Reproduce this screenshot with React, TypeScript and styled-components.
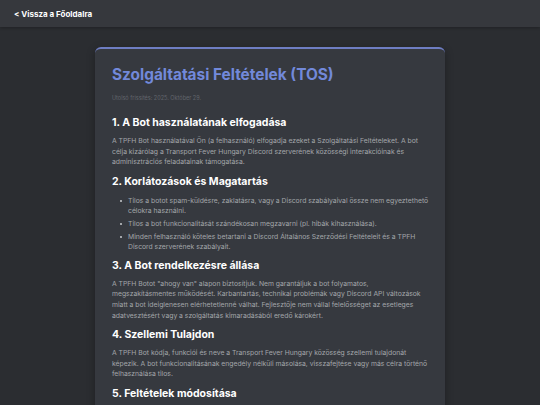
import React from 'react';
import styled, { createGlobalStyle } from 'styled-components';

const GlobalStyle = createGlobalStyle`
  html, body {
    margin: 0;
    padding: 0;
    background: #2b2d31;
  }
  body {
    font-family: Inter, "Noto Sans", "Liberation Sans", sans-serif;
    color: #dcddde;
  }
`;

const Header = styled.header`
  background: #36383d;
  height: 27px;
  display: flex;
  align-items: center;
  padding: 0 14px;
  box-shadow: 0 1px 3px rgba(0, 0, 0, 0.25);
`;

const BackLink = styled.a`
  color: #ffffff;
  font-weight: 700;
  font-size: 8px;
  text-decoration: none;
`;

const Main = styled.main`
  display: flex;
  justify-content: center;
  padding-top: 20px;
`;

const Card = styled.article`
  width: 350px;
  box-sizing: border-box;
  background: #36393f;
  border-top: 2px solid #6e7dc2;
  border-radius: 6px;
  padding: 15px 14px 20px 17px;
  box-shadow: 0 2px 8px rgba(0, 0, 0, 0.3);
`;

const Title = styled.h1`
  margin: 0;
  color: #7289da;
  font-size: 15.4px;
  font-weight: 700;
  line-height: 22px;
`;

const Updated = styled.p`
  margin: 9px 0 15px;
  font-size: 5.5px;
  color: #62656c;
`;

const SectionTitle = styled.h2`
  margin: 7px 0 6px;
  color: #ffffff;
  font-size: 10.5px;
  font-weight: 700;
  line-height: 14px;
`;

const Paragraph = styled.p`
  margin: 0;
  padding-right: 3px;
  font-size: 6.8px;
  line-height: 10.6px;
  color: #a3a6aa;
`;

const List = styled.ul`
  margin: 0;
  padding: 1px 0 0 8px;
  list-style: none;
`;

const Item = styled.li`
  position: relative;
  padding-left: 8px;
  font-size: 6.8px;
  line-height: 10px;
  color: #a3a6aa;
  & + & {
    margin-top: 3px;
  }
  &::before {
    content: '';
    position: absolute;
    left: 0;
    top: 4px;
    width: 2px;
    height: 2px;
    background: #a3a6aa;
  }
`;

const sections = [
  {
    title: '1. A Bot használatának elfogadása',
    text: 'A TPFH Bot használatával Ön (a felhasználó) elfogadja ezeket a Szolgáltatási Feltételeket. A bot célja kizárólag a Transport Fever Hungary Discord szerverének közösségi interakcióinak és adminisztrációs feladatainak támogatása.',
  },
  {
    title: '2. Korlátozások és Magatartás',
    items: [
      'Tilos a botot spam-küldésre, zaklatásra, vagy a Discord szabályaival össze nem egyeztethető célokra használni.',
      'Tilos a bot funkcionalitását szándékosan megzavarni (pl. hibák kihasználása).',
      'Minden felhasználó köteles betartani a Discord Általános Szerződési Feltételeit és a TPFH Discord szerverének szabályait.',
    ],
  },
  {
    title: '3. A Bot rendelkezésre állása',
    text: 'A TPFH Botot "ahogy van" alapon biztosítjuk. Nem garantáljuk a bot folyamatos, megszakításmentes működését. Karbantartás, technikai problémák vagy Discord API változások miatt a bot ideiglenesen elérhetetlenné válhat. Fejlesztője nem vállal felelősséget az esetleges adatvesztésért vagy a szolgáltatás kimaradásából eredő károkért.',
  },
  {
    title: '4. Szellemi Tulajdon',
    text: 'A TPFH Bot kódja, funkciói és neve a Transport Fever Hungary közösség szellemi tulajdonát képezik. A bot funkcionalitásának engedély nélküli másolása, visszafejtése vagy más célra történő felhasználása tilos.',
  },
  {
    title: '5. Feltételek módosítása',
    text: 'A fejlesztő fenntartja a jogot, hogy ezeket a feltételeket bármikor módosítsa. A változásokról a Discord szerveren értesítjük a felhasználókat.',
  },
];

export default function App() {
  return (
    <>
      <GlobalStyle />
      <Header>
        <BackLink href="#">&lt; Vissza a Főoldalra</BackLink>
      </Header>
      <Main>
        <Card>
          <Title>Szolgáltatási Feltételek (TOS)</Title>
          <Updated>Utolsó frissítés: 2025. Október 29.</Updated>
          {sections.map((section) => (
            <section key={section.title}>
              <SectionTitle>{section.title}</SectionTitle>
              {section.text && <Paragraph>{section.text}</Paragraph>}
              {section.items && (
                <List>
                  {section.items.map((item) => (
                    <Item key={item}>{item}</Item>
                  ))}
                </List>
              )}
            </section>
          ))}
        </Card>
      </Main>
    </>
  );
}
